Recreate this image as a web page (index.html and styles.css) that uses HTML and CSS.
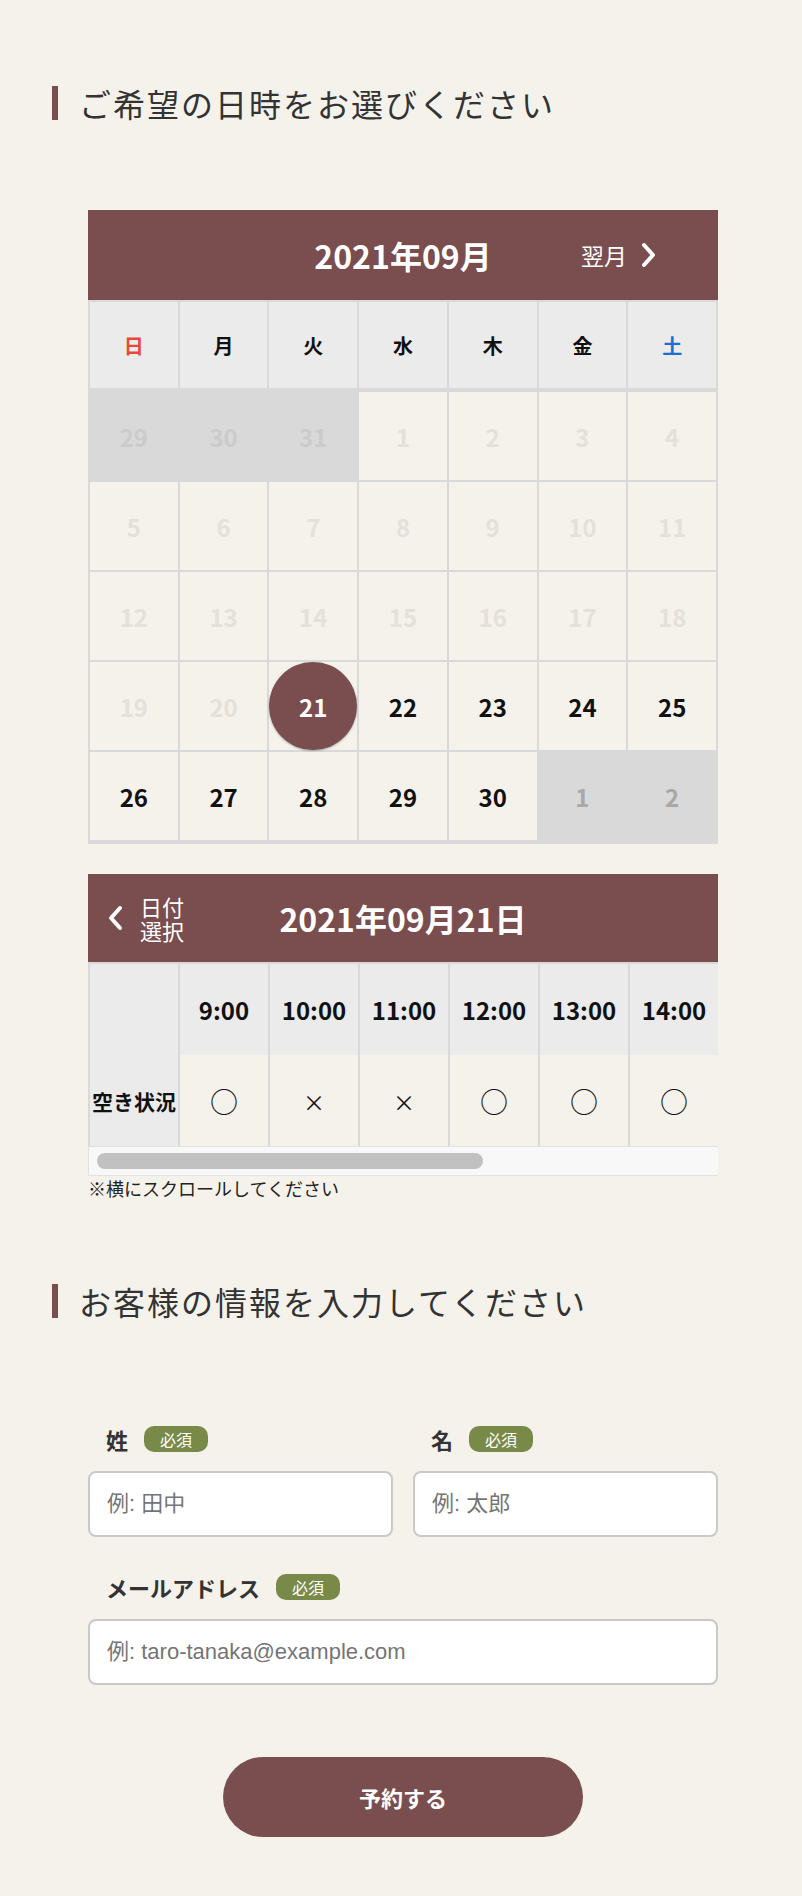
FILE: index.html
```html
<!DOCTYPE html>
<html lang="ja">
<head>
    <meta charset="UTF-8">
    <meta name="viewport" content="width=device-width, initial-scale=1.0">
    <title>ご予約</title>
    <link rel="stylesheet" href="styles.css">
</head>
<body>
<main class="page">
    <h2 class="section-title">ご希望の日時をお選びください</h2>

    <!-- カレンダー -->
    <div class="calendar">
        <div class="cal-head">
            <span></span>
            <span class="cal-month">2021年09月</span>
            <a class="cal-next">翌月
                <svg width="15" height="26" viewBox="0 0 15 26"><polyline points="3,3 12,13 3,23" fill="none" stroke="#fff" stroke-width="4" stroke-linecap="round" stroke-linejoin="round"/></svg>
            </a>
        </div>
        <div class="cal-grid">
            <div class="wd sun">日</div>
            <div class="wd">月</div>
            <div class="wd">火</div>
            <div class="wd">水</div>
            <div class="wd">木</div>
            <div class="wd">金</div>
            <div class="wd sat">土</div>

            <div class="day prev">29</div>
            <div class="day prev">30</div>
            <div class="day prev">31</div>
            <div class="day past">1</div>
            <div class="day past">2</div>
            <div class="day past">3</div>
            <div class="day past">4</div>

            <div class="day past">5</div>
            <div class="day past">6</div>
            <div class="day past">7</div>
            <div class="day past">8</div>
            <div class="day past">9</div>
            <div class="day past">10</div>
            <div class="day past">11</div>

            <div class="day past">12</div>
            <div class="day past">13</div>
            <div class="day past">14</div>
            <div class="day past">15</div>
            <div class="day past">16</div>
            <div class="day past">17</div>
            <div class="day past">18</div>

            <div class="day past">19</div>
            <div class="day past">20</div>
            <div class="day selected"><span>21</span></div>
            <div class="day">22</div>
            <div class="day">23</div>
            <div class="day">24</div>
            <div class="day">25</div>

            <div class="day">26</div>
            <div class="day">27</div>
            <div class="day">28</div>
            <div class="day">29</div>
            <div class="day">30</div>
            <div class="day next">1</div>
            <div class="day next">2</div>
        </div>
    </div>

    <!-- 時間帯の空き状況 -->
    <div class="slots">
        <div class="slots-head">
            <a class="slots-back">
                <svg width="15" height="26" viewBox="0 0 15 26"><polyline points="12,3 3,13 12,23" fill="none" stroke="#fff" stroke-width="4" stroke-linecap="round" stroke-linejoin="round"/></svg>
                <span>日付<br>選択</span>
            </a>
            <span class="slots-date">2021年09月21日</span>
            <span></span>
        </div>
        <div class="slots-scroll">
            <table class="slots-table">
                <tr>
                    <th class="label"></th>
                    <th>9:00</th>
                    <th>10:00</th>
                    <th>11:00</th>
                    <th>12:00</th>
                    <th>13:00</th>
                    <th>14:00</th>
                    <th>15:00</th>
                    <th>16:00</th>
                    <th>17:00</th>
                    <th>18:00</th>
                </tr>
                <tr>
                    <th class="label">空き状況</th>
                    <td class="mark">○</td>
                    <td class="cross">×</td>
                    <td class="cross">×</td>
                    <td class="mark">○</td>
                    <td class="mark">○</td>
                    <td class="mark">○</td>
                    <td class="mark">○</td>
                    <td class="cross">×</td>
                    <td class="mark">○</td>
                    <td class="mark">○</td>
                </tr>
            </table>
        </div>
        <div class="scrollbar"><div class="scrollbar-thumb"></div></div>
        <p class="slots-note">※横にスクロールしてください</p>
    </div>

    <h2 class="section-title title-info">お客様の情報を入力してください</h2>

    <!-- 入力フォーム -->
    <form class="form">
        <div class="form-row">
            <div class="field">
                <label class="field-label">姓<span class="req">必須</span></label>
                <input type="text" class="input" placeholder="例: 田中">
            </div>
            <div class="field">
                <label class="field-label">名<span class="req">必須</span></label>
                <input type="text" class="input" placeholder="例: 太郎">
            </div>
        </div>
        <div class="field field-mail">
            <label class="field-label">メールアドレス<span class="req">必須</span></label>
            <input type="email" class="input" placeholder="例: taro-tanaka@example.com">
        </div>
        <div class="submit-wrap">
            <button type="button" class="btn-submit">予約する</button>
        </div>
    </form>
</main>
</body>
</html>
```

FILE: styles.css
```css
body {
    margin: 0;
    background-color: #f5f2ec;
    color: #333;
    font-family: "Noto Sans CJK JP", sans-serif;
}
.page {
    padding: 0 48px 60px 52px;
}
.section-title {
    margin: 86px 0 0;
    padding-left: 21px;
    border-left: 6px solid #7a4d4f;
    font-size: 32px;
    font-weight: 400;
    letter-spacing: 2px;
    line-height: 34px;
    color: #333;
}
.title-info {
    margin-top: 86px;
}

/* カレンダー */
.calendar {
    margin: 90px 36px 0;
}
.cal-head,
.slots-head {
    display: grid;
    grid-template-columns: 1fr auto 1fr;
    align-items: center;
    height: 90px;
    background-color: #7a4d4f;
    color: #fff;
}
.cal-month,
.slots-date {
    font-size: 32px;
    font-weight: 700;
}
.cal-next {
    justify-self: end;
    display: flex;
    align-items: center;
    gap: 14px;
    margin-right: 62px;
    font-size: 23px;
    cursor: pointer;
}
.cal-grid {
    display: grid;
    grid-template-columns: repeat(7, 1fr);
    grid-auto-rows: 88px;
    gap: 2px;
    padding: 2px 2px 4px;
    background-color: #d9d9d9;
}
.wd {
    display: flex;
    align-items: center;
    justify-content: center;
    margin-bottom: 2px;
    background-color: #ebebeb;
    font-size: 20px;
    font-weight: 700;
    color: #111;
}
.wd.sun {
    color: #e8473b;
}
.wd.sat {
    color: #1d6fcf;
}
.day {
    display: flex;
    align-items: center;
    justify-content: center;
    background-color: #f5f2ec;
    font-size: 24px;
    font-weight: 700;
    color: #111;
}
.day.past {
    color: #e4e0da;
}
.day.prev {
    background-color: #d9d9d9;
    color: #cbcbcb;
}
.day.next {
    background-color: #d9d9d9;
    color: #a8a8a8;
}
.day.selected span {
    display: flex;
    align-items: center;
    justify-content: center;
    width: 100%;
    height: 100%;
    border-radius: 50%;
    background-color: #7a4d4f;
    box-shadow: 0 1px 2px rgba(0, 0, 0, 0.3);
    color: #fff;
}

/* 時間帯 */
.slots {
    margin: 30px 36px 0;
}
.slots-head {
    height: 88px;
}
.slots-back {
    justify-self: start;
    display: flex;
    align-items: center;
    gap: 17px;
    padding-left: 20px;
    font-size: 22px;
    line-height: 24px;
    cursor: pointer;
}
.slots-scroll {
    overflow: hidden;
    border-top: 2px solid #d9d9d9;
    border-left: 2px solid #d9d9d9;
}
.slots-table {
    border-collapse: separate;
    border-spacing: 0;
    table-layout: fixed;
}
.slots-table th,
.slots-table td {
    width: 88px;
    min-width: 88px;
    height: 91px;
    padding: 0;
    border-right: 2px solid #d9d9d9;
    text-align: center;
    white-space: nowrap;
    color: #111;
}
.slots-table th {
    background-color: #ebebeb;
    font-size: 24px;
    font-weight: 700;
}
.slots-table th.label {
    font-size: 21px;
}
.slots-table td {
    background-color: #f5f2ec;
}
.slots-table .mark {
    font-size: 28px;
}
.slots-table .cross {
    font-size: 22px;
}

/* 横スクロールバー */
.scrollbar {
    height: 16px;
    padding: 6px 8px;
    border-top: 1px solid #e2e2e2;
    border-bottom: 1px solid #e2e2e2;
    border-left: 1px solid #e2e2e2;
    background-color: #f8f8f8;
}
.scrollbar-thumb {
    width: 386px;
    height: 16px;
    border-radius: 8px;
    background-color: #c1c1c1;
}
.slots-note {
    margin: 2px 0 0;
    font-size: 18px;
    line-height: 20px;
    color: #222;
}

/* フォーム */
.form {
    margin: 108px 36px 0;
}
.form-row {
    display: grid;
    grid-template-columns: 1fr 1fr;
    gap: 20px;
}
.field-label {
    display: flex;
    align-items: center;
    gap: 16px;
    height: 26px;
    margin: 0 0 19px 18px;
    font-size: 22px;
    font-weight: 700;
    color: #333;
}
.req {
    padding: 0 16px;
    border-radius: 10px;
    background-color: #788948;
    font-size: 16px;
    font-weight: 400;
    line-height: 26px;
    color: #fff;
}
.input {
    display: block;
    box-sizing: border-box;
    width: 100%;
    height: 66px;
    padding: 0 17px;
    border: 2px solid #c9c9c9;
    border-radius: 8px;
    background-color: #fff;
    font-family: "Liberation Sans", "Noto Sans CJK JP", sans-serif;
    font-size: 22px;
    color: #333;
}
.input::placeholder {
    color: #757575;
}
.field-mail {
    margin-top: 37px;
}
.submit-wrap {
    display: flex;
    justify-content: center;
    margin-top: 72px;
}
.btn-submit {
    width: 360px;
    height: 80px;
    border: none;
    border-radius: 40px;
    background-color: #7a4d4f;
    font-family: "Noto Sans CJK JP", sans-serif;
    font-size: 22px;
    font-weight: 700;
    color: #fff;
    cursor: pointer;
}
```
